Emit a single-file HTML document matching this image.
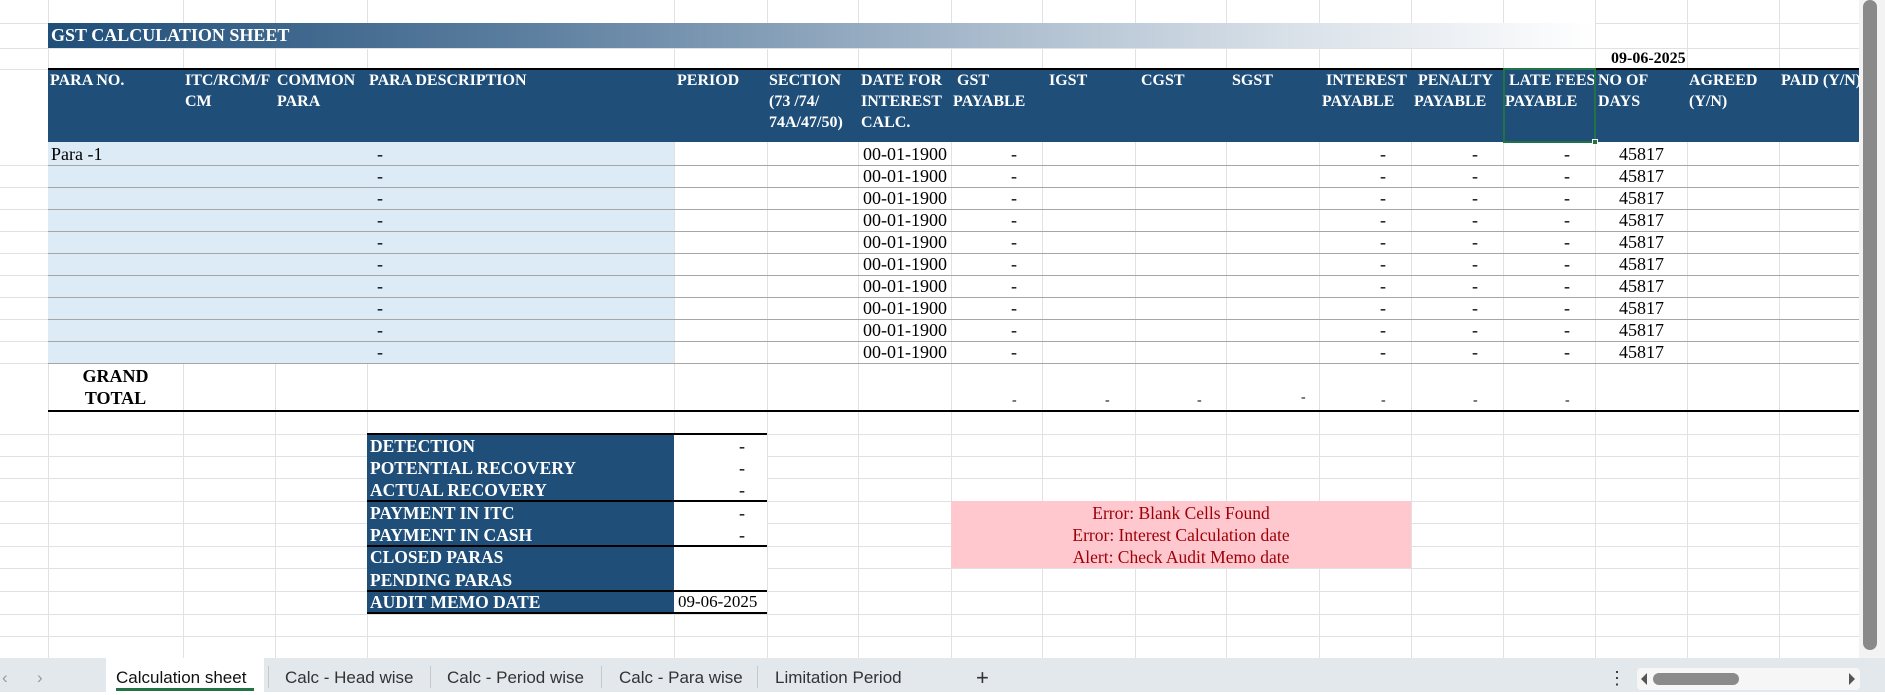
<!DOCTYPE html>
<html><head><meta charset="utf-8"><style>
*{margin:0;padding:0;box-sizing:border-box}
body{width:1885px;height:692px;overflow:hidden;background:#fff;position:relative;font-family:"Liberation Serif",serif;}
.a{position:absolute}
.v{position:absolute;top:0;height:658px;width:1px;background:#e1e1e1}
.h{position:absolute;left:0;width:1859px;height:1px;background:#e1e1e1}
.g{position:absolute;left:48px;width:1811px;height:1px;background:#a6a6a6}
.hd{position:absolute;color:#fff;font-weight:bold;font-size:16px;line-height:21px;top:70px;white-space:nowrap}
.r{position:absolute;left:0;width:1859px;height:22px;font-size:18px;line-height:22px;color:#000}
.r span{position:absolute}
.bx{position:absolute;left:367px;width:307px;background:#1f4e79;color:#fff;font-weight:bold;font-size:17.5px;padding-left:3px;line-height:22px;white-space:nowrap}
.bk{position:absolute;left:367px;width:400px;height:2px;background:#000}
.tab{position:absolute;top:661px;height:34px;line-height:34px;font-family:"Liberation Sans",sans-serif;font-size:17px;color:#333;white-space:nowrap}
</style></head><body>
<div class="v" style="left:48px"></div><div class="v" style="left:183px"></div><div class="v" style="left:275px"></div><div class="v" style="left:367px"></div><div class="v" style="left:674px"></div><div class="v" style="left:767px"></div><div class="v" style="left:858px"></div><div class="v" style="left:951px"></div><div class="v" style="left:1042px"></div><div class="v" style="left:1135px"></div><div class="v" style="left:1226px"></div><div class="v" style="left:1319px"></div><div class="v" style="left:1411px"></div><div class="v" style="left:1503px"></div><div class="v" style="left:1595px"></div><div class="v" style="left:1687px"></div><div class="v" style="left:1779px"></div>
<div class="h" style="top:23px"></div><div class="h" style="top:48px"></div><div class="h" style="top:69px"></div>
<div class="h" style="top:434px"></div><div class="h" style="top:456px"></div><div class="h" style="top:478px"></div><div class="h" style="top:501px"></div><div class="h" style="top:523px"></div><div class="h" style="top:546px"></div><div class="h" style="top:568px"></div><div class="h" style="top:591px"></div><div class="h" style="top:614px"></div><div class="h" style="top:636px"></div>
<div class="h" style="top:165px;width:48px"></div><div class="h" style="top:187px;width:48px"></div><div class="h" style="top:209px;width:48px"></div><div class="h" style="top:231px;width:48px"></div><div class="h" style="top:253px;width:48px"></div><div class="h" style="top:275px;width:48px"></div><div class="h" style="top:297px;width:48px"></div><div class="h" style="top:319px;width:48px"></div><div class="h" style="top:341px;width:48px"></div><div class="h" style="top:363px;width:48px"></div>

<div class="a" style="left:48px;top:23px;width:1547px;height:25px;background:linear-gradient(90deg,#1f4e79 0%,#5a7d9e 30%,#a3b6c9 58%,#d8e0e8 80%,#fff 100%)"></div>
<div class="a" style="left:51px;top:23px;line-height:25px;color:#fff;font-weight:bold;font-size:18px">GST CALCULATION SHEET</div>
<div class="a" style="left:1611px;top:49px;font-size:16px;font-weight:bold;line-height:20px">09-06-2025</div>

<div class="a" style="left:48px;top:69px;width:1811px;height:73px;background:#1f4e79"></div>
<div class="a" style="left:48px;top:68px;width:1811px;height:2px;background:#000"></div>
<div class="hd" style="left:50px">PARA NO.</div>
<div class="hd" style="left:185px">ITC/RCM/F<br>CM</div>
<div class="hd" style="left:277px">COMMON<br>PARA</div>
<div class="hd" style="left:369px">PARA DESCRIPTION</div>
<div class="hd" style="left:677px">PERIOD</div>
<div class="hd" style="left:769px">SECTION<br>(73 /74/<br>74A/47/50)</div>
<div class="hd" style="left:861px">DATE FOR<br>INTEREST<br>CALC.</div>
<div class="hd" style="left:953px">&nbsp;GST<br>PAYABLE</div>
<div class="hd" style="left:1049px">IGST</div>
<div class="hd" style="left:1141px">CGST</div>
<div class="hd" style="left:1232px">SGST</div>
<div class="hd" style="left:1322px">&nbsp;INTEREST<br>PAYABLE</div>
<div class="hd" style="left:1414px">&nbsp;PENALTY<br>PAYABLE</div>
<div class="hd" style="left:1505px">&nbsp;LATE FEES<br>PAYABLE</div>
<div class="hd" style="left:1598px">NO OF<br>DAYS</div>
<div class="hd" style="left:1689px">AGREED<br>(Y/N)</div>
<div class="hd" style="left:1781px">PAID (Y/N)</div>
<div class="a" style="left:1503px;top:68px;width:93px;height:75px;border:2px solid #217346"></div>
<div class="a" style="left:1592px;top:139px;width:6px;height:6px;background:#217346;border:1px solid #fff"></div>

<div class="a" style="left:48px;top:142px;width:626px;height:221px;background:#ddebf7"></div>
<div class="g" style="top:165px"></div><div class="g" style="top:187px"></div><div class="g" style="top:209px"></div><div class="g" style="top:231px"></div><div class="g" style="top:253px"></div><div class="g" style="top:275px"></div><div class="g" style="top:297px"></div><div class="g" style="top:319px"></div><div class="g" style="top:341px"></div><div class="g" style="top:363px"></div>

<div class="r" style="top:143px"><span style="left:51px">Para -1</span><span style="left:377px">-</span><span style="left:863px">00-01-1900</span><span style="left:1011px">-</span><span style="left:1380px">-</span><span style="left:1472px">-</span><span style="left:1564px">-</span><span style="left:1619px">45817</span></div>
<div class="r" style="top:165px"><span style="left:377px">-</span><span style="left:863px">00-01-1900</span><span style="left:1011px">-</span><span style="left:1380px">-</span><span style="left:1472px">-</span><span style="left:1564px">-</span><span style="left:1619px">45817</span></div>
<div class="r" style="top:187px"><span style="left:377px">-</span><span style="left:863px">00-01-1900</span><span style="left:1011px">-</span><span style="left:1380px">-</span><span style="left:1472px">-</span><span style="left:1564px">-</span><span style="left:1619px">45817</span></div>
<div class="r" style="top:209px"><span style="left:377px">-</span><span style="left:863px">00-01-1900</span><span style="left:1011px">-</span><span style="left:1380px">-</span><span style="left:1472px">-</span><span style="left:1564px">-</span><span style="left:1619px">45817</span></div>
<div class="r" style="top:231px"><span style="left:377px">-</span><span style="left:863px">00-01-1900</span><span style="left:1011px">-</span><span style="left:1380px">-</span><span style="left:1472px">-</span><span style="left:1564px">-</span><span style="left:1619px">45817</span></div>
<div class="r" style="top:253px"><span style="left:377px">-</span><span style="left:863px">00-01-1900</span><span style="left:1011px">-</span><span style="left:1380px">-</span><span style="left:1472px">-</span><span style="left:1564px">-</span><span style="left:1619px">45817</span></div>
<div class="r" style="top:275px"><span style="left:377px">-</span><span style="left:863px">00-01-1900</span><span style="left:1011px">-</span><span style="left:1380px">-</span><span style="left:1472px">-</span><span style="left:1564px">-</span><span style="left:1619px">45817</span></div>
<div class="r" style="top:297px"><span style="left:377px">-</span><span style="left:863px">00-01-1900</span><span style="left:1011px">-</span><span style="left:1380px">-</span><span style="left:1472px">-</span><span style="left:1564px">-</span><span style="left:1619px">45817</span></div>
<div class="r" style="top:319px"><span style="left:377px">-</span><span style="left:863px">00-01-1900</span><span style="left:1011px">-</span><span style="left:1380px">-</span><span style="left:1472px">-</span><span style="left:1564px">-</span><span style="left:1619px">45817</span></div>
<div class="r" style="top:341px"><span style="left:377px">-</span><span style="left:863px">00-01-1900</span><span style="left:1011px">-</span><span style="left:1380px">-</span><span style="left:1472px">-</span><span style="left:1564px">-</span><span style="left:1619px">45817</span></div>

<div class="a" style="left:48px;top:365px;width:135px;text-align:center;font-weight:bold;font-size:18px;line-height:22px">GRAND<br>TOTAL</div>
<div class="r" style="top:390px;font-size:14px"><span style="left:1012px">-</span><span style="left:1105px">-</span><span style="left:1197px">-</span><span style="left:1301px;top:-3px">-</span><span style="left:1381px">-</span><span style="left:1473px">-</span><span style="left:1565px">-</span></div>
<div class="a" style="left:48px;top:410px;width:1811px;height:2px;background:#000"></div>

<div class="a" style="left:674px;top:434px;width:93px;height:179px;background:#fff"></div>
<div class="bx" style="top:434px;height:179px"></div>
<div class="bx" style="top:435px;background:none">DETECTION</div>
<div class="bx" style="top:457px;background:none">POTENTIAL RECOVERY</div>
<div class="bx" style="top:479px;background:none">ACTUAL RECOVERY</div>
<div class="bx" style="top:502px;background:none">PAYMENT IN ITC</div>
<div class="bx" style="top:524px;background:none">PAYMENT IN CASH</div>
<div class="bx" style="top:546px;background:none">CLOSED PARAS</div>
<div class="bx" style="top:569px;background:none">PENDING PARAS</div>
<div class="bx" style="top:591px;background:none">AUDIT MEMO DATE</div>
<div class="a" style="left:739px;top:435px;font-size:18px;line-height:22px">-<br>-<br>-</div>
<div class="a" style="left:739px;top:502px;font-size:18px;line-height:22px">-<br>-</div>
<div class="a" style="left:678px;top:591px;font-size:17px;line-height:22px;white-space:nowrap">09-06-2025</div>
<div class="bk" style="top:433px"></div><div class="bk" style="top:500px"></div><div class="bk" style="top:545px"></div><div class="bk" style="top:590px"></div><div class="bk" style="top:612px"></div>

<div class="a" style="left:951px;top:501px;width:460px;height:67px;background:#ffc7ce;color:#9c0006;text-align:center;font-size:17.5px;line-height:22px;padding-top:1px">Error: Blank Cells Found<br>Error: Interest Calculation date<br>Alert: Check Audit Memo date</div>

<div class="a" style="left:1859px;top:0;width:26px;height:658px;background:#f3f3f3"></div>
<div class="a" style="left:1863px;top:0;width:14px;height:650px;background:#8a8a8a;border-radius:7px"></div>

<div class="a" style="left:0;top:658px;width:1885px;height:34px;background:#e3e8ec"></div>
<div class="tab" style="left:2px;color:#999">&#8249;</div>
<div class="tab" style="left:37px;color:#999">&#8250;</div>
<div class="a" style="left:106px;top:658px;width:158px;height:34px;background:#fff"></div>
<div class="tab" style="left:116px;color:#111">Calculation sheet</div>
<div class="a" style="left:116px;top:688px;width:138px;height:3px;background:#217346"></div>
<div class="a" style="left:268px;top:666px;width:1px;height:22px;background:#c8c8c8"></div>
<div class="tab" style="left:285px">Calc - Head wise</div>
<div class="a" style="left:430px;top:666px;width:1px;height:22px;background:#c8c8c8"></div>
<div class="tab" style="left:447px">Calc - Period wise</div>
<div class="a" style="left:601px;top:666px;width:1px;height:22px;background:#c8c8c8"></div>
<div class="tab" style="left:619px">Calc - Para wise</div>
<div class="a" style="left:757px;top:666px;width:1px;height:22px;background:#c8c8c8"></div>
<div class="tab" style="left:775px">Limitation Period</div>
<div class="tab" style="left:976px;font-size:22px">+</div>
<div class="tab" style="left:1608px;font-size:18px">&#8942;</div>
<div class="a" style="left:1637px;top:668px;width:223px;height:22px;background:#f6f6f6;border-radius:4px"></div>
<div class="a" style="left:1641px;top:673px;width:0;height:0;border-top:6px solid transparent;border-bottom:6px solid transparent;border-right:6px solid #555"></div>
<div class="a" style="left:1653px;top:673px;width:86px;height:12px;background:#8a8a8a;border-radius:6px"></div>
<div class="a" style="left:1849px;top:673px;width:0;height:0;border-top:6px solid transparent;border-bottom:6px solid transparent;border-left:6px solid #555"></div>
</body></html>
